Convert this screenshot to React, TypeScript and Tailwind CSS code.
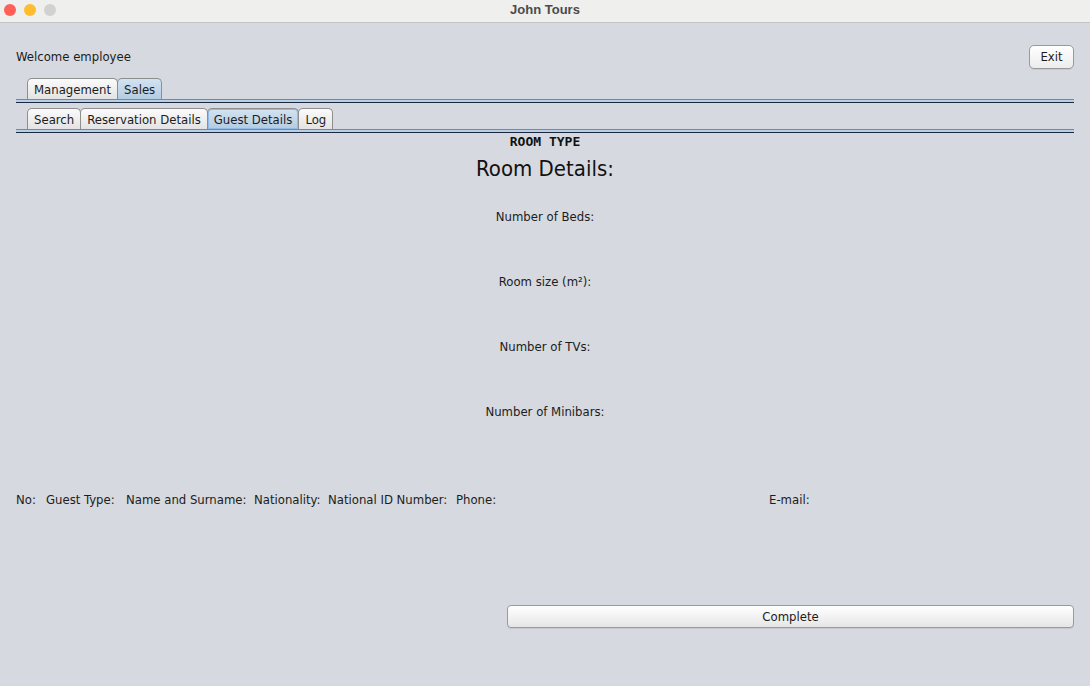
import React from 'react';

const ui = "font-['DejaVu_Sans_Condensed','DejaVu_Sans',sans-serif]";

const tabBase =
  'h-[21px] px-[6px] flex items-center border border-[#8e8e8e] border-b-0 rounded-t-[5px] text-[13px] text-[#1c1c1c] leading-none -mr-px';
const tabIdle = 'bg-gradient-to-b from-[#fbfbfb] to-[#e3e3e3]';
const tabActive = 'bg-gradient-to-b from-[#d3e3f1] to-[#b3cce2]';

function TabRow({ tabs, active, focus }: { tabs: string[]; active: string; focus?: boolean }) {
  return (
    <div>
      <div className="flex pl-[11px]">
        {tabs.map(t => (
          <div
            key={t}
            className={`${tabBase} ${t === active ? tabActive : tabIdle} ${
              t === active && focus ? 'shadow-[inset_0_0_0_1px_#8fbbe6] border-[#6f9cc9]' : ''
            }`}
          >
            {t}
          </div>
        ))}
      </div>
      {/* underline strip below the tabs */}
      <div className="h-px bg-[#7c8694]" />
      <div className="h-[2px] bg-[#b7d0e6]" />
      <div className="h-px bg-[#1e2740]" />
    </div>
  );
}

export default function App() {
  const specs = ['Number of Beds:', 'Room size (m²):', 'Number of TVs:', 'Number of Minibars:'];
  const cols = [
    { label: 'No:', w: 'w-[30px]' },
    { label: 'Guest Type:', w: 'w-[80px]' },
    { label: 'Name and Surname:', w: 'w-[128px]' },
    { label: 'Nationality:', w: 'w-[74px]' },
    { label: 'National ID Number:', w: 'w-[128px]' },
    { label: 'Phone:', w: 'w-[313px]' },
    { label: 'E-mail:', w: '' },
  ];

  return (
    <div className={`w-[1090px] h-[686px] bg-[#d6d9df] ${ui} text-[13px] text-[#1c1c1c] overflow-hidden`}>
      {/* Window title bar */}
      <div className="h-[23px] bg-[#efefed] border-b border-[#c4c4c4] flex items-center relative">
        <div className="flex gap-[8px] pl-[4px] -mt-[3px]">
          <span className="w-[12px] h-[12px] rounded-full bg-[#fe5f57]" />
          <span className="w-[12px] h-[12px] rounded-full bg-[#febc2e]" />
          <span className="w-[12px] h-[12px] rounded-full bg-[#d1d1d1]" />
        </div>
        <div className="absolute inset-0 flex items-center justify-center -mt-[3px] font-['Liberation_Sans',sans-serif] font-bold text-[13px] text-[#4b4b4b]">
          John Tours
        </div>
      </div>

      {/* Header */}
      <div className="flex items-center justify-between px-[16px] mt-[22px] h-[24px]">
        <span>Welcome employee</span>
        <button className="w-[45px] h-[24px] rounded-[5px] border border-[#9a9a9a] bg-gradient-to-b from-[#ffffff] to-[#ececec] text-[13px] shadow-[0_1px_0_rgba(0,0,0,0.08)]">
          Exit
        </button>
      </div>

      <div className="px-[16px] mt-[9px]">
        <TabRow tabs={['Management', 'Sales']} active="Sales" />
        <div className="mt-[5px]">
          <TabRow tabs={['Search', 'Reservation Details', 'Guest Details', 'Log']} active="Guest Details" focus />
        </div>
      </div>

      {/* Room info */}
      <div className="flex flex-col items-center">
        <div className="h-[18px] flex items-center font-['DejaVu_Sans_Mono',monospace] font-bold text-[13px] text-[#111]">
          ROOM TYPE
        </div>
        <div className="mt-[2px] h-[30px] flex items-center text-[22px] text-[#111]">Room Details:</div>
        {specs.map((s, i) => (
          <div key={s} className={`${i === 0 ? 'mt-[25px]' : 'mt-[47px]'} h-[18px] flex items-center`}>
            {s}
          </div>
        ))}
      </div>

      {/* Guest table header */}
      <div className="flex px-[16px] mt-[70px] h-[18px] items-center">
        {cols.map(c => (
          <span key={c.label} className={`${c.w} shrink-0 whitespace-nowrap`}>
            {c.label}
          </span>
        ))}
      </div>

      <div className="flex justify-end px-[16px] mt-[96px]">
        <button className="w-[567px] h-[23px] rounded-[4px] border border-[#9a9a9a] bg-gradient-to-b from-[#ffffff] to-[#e6e6e6] text-[13px] shadow-[0_1px_0_rgba(0,0,0,0.08)]">
          Complete
        </button>
      </div>
    </div>
  );
}
